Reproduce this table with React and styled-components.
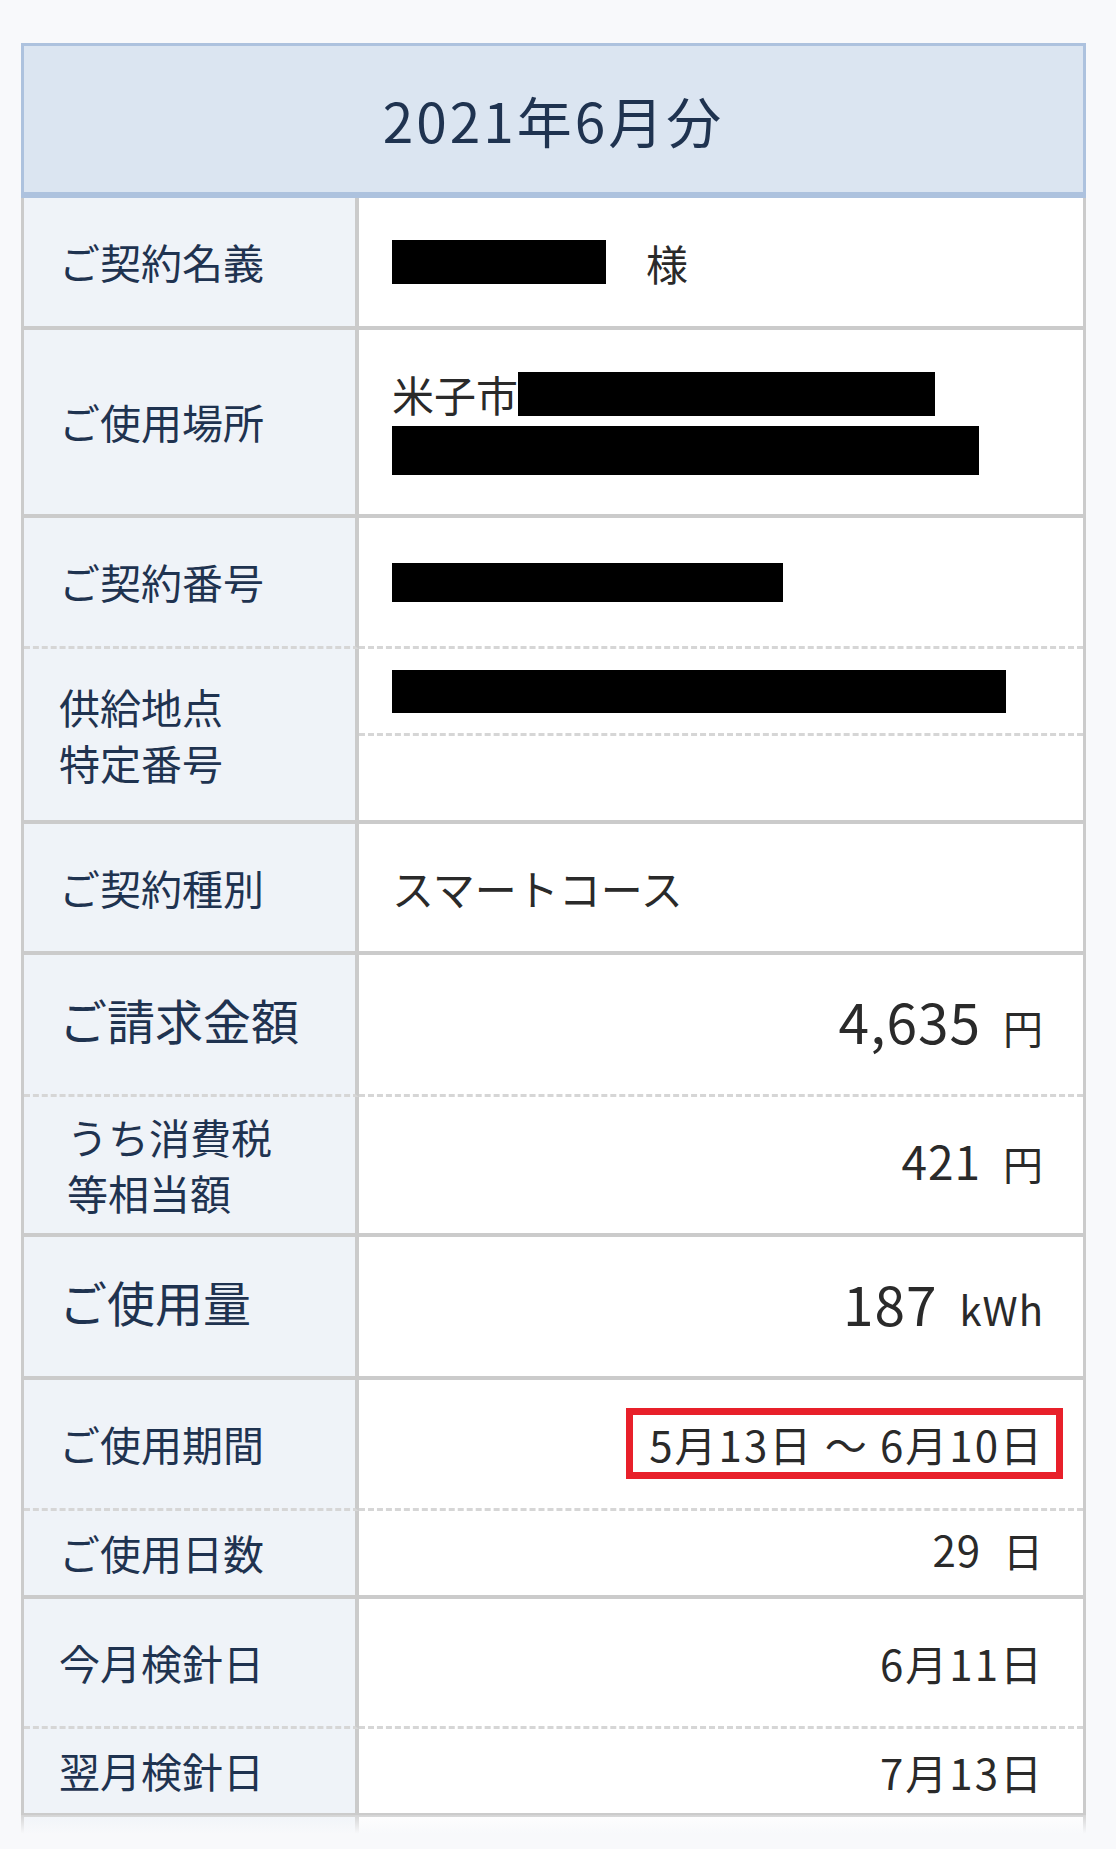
import styled, { createGlobalStyle } from "styled-components";

const GlobalStyle = createGlobalStyle`
  html, body {
    margin: 0;
    padding: 0;
    background: #f8f9fb;
  }
  body {
    font-family: "Noto Sans CJK JP", "Noto Sans", sans-serif;
  }
`;

const rows = [
  { label: "ご契約名義", h: 128, kind: "name" },
  { label: "ご使用場所", h: 184, kind: "address" },
  { label: "ご契約番号", h: 128, dashed: true, kind: "contract" },
  { label: ["供給地点", "特定番号"], h: 171, kind: "supply" },
  { label: "ご契約種別", h: 127, kind: "text", value: "スマートコース" },
  { label: "ご請求金額", big: true, h: 139, dashed: true, kind: "amount", num: "4,635", size: 55, unit: "円" },
  { label: ["うち消費税", "等相当額"], indent: 8, h: 136, kind: "amount", num: "421", size: 46, unit: "円" },
  { label: "ご使用量", big: true, h: 139, kind: "amount", num: "187", size: 55, unit: "kWh" },
  { label: "ご使用期間", h: 128, dashed: true, kind: "period", value: "5月13日 〜 6月10日" },
  { label: "ご使用日数", h: 84, kind: "amount", num: "29", size: 42, unit: "日" },
  { label: "今月検針日", h: 127, dashed: true, kind: "right", value: "6月11日" },
  { label: "翌月検針日", h: 84, kind: "right", value: "7月13日" },
];

const App = () => {
  return (
    <Page>
      <GlobalStyle />
      <Sheet>
        <Title>2021年6月分</Title>
        {rows.map((row, i) => (
          <Row key={i} $h={row.h} $dashed={row.dashed}>
            <Label $big={row.big} $indent={row.indent} $dashed={row.dashed}>
              <span>
                {Array.isArray(row.label)
                  ? row.label.map((line) => <LabelLine key={line}>{line}</LabelLine>)
                  : row.label}
              </span>
            </Label>
            {renderValue(row)}
          </Row>
        ))}
        <Row $h={60}>
          <Label />
          <Value />
        </Row>
      </Sheet>
      <Fade />
    </Page>
  );
};

const renderValue = (row) => {
  switch (row.kind) {
    case "name":
      return (
        <Value>
          <Redact $w={214} $h={44} />
          <Honorific>様</Honorific>
        </Value>
      );
    case "address":
      return (
        <Value>
          <Lines>
            <div>
              米子市
              <Redact $w={417} $h={44} />
            </div>
            <div>
              <Redact $w={587} $h={49} />
            </div>
          </Lines>
        </Value>
      );
    case "contract":
      return (
        <Value $dashed>
          <Redact $w={391} $h={39} />
        </Value>
      );
    case "supply":
      return (
        <Stack>
          <SubCell $dashed>
            <Redact $w={614} $h={43} />
          </SubCell>
          <SubCell />
        </Stack>
      );
    case "text":
      return <Value>{row.value}</Value>;
    case "amount":
      return (
        <Value $right $lift $dashed={row.dashed}>
          <span>
            <Num $size={row.size}>{row.num}</Num>
            <Unit>{row.unit}</Unit>
          </span>
        </Value>
      );
    case "period":
      return (
        <Value $right $dashed>
          <Marked>{row.value}</Marked>
        </Value>
      );
    default:
      return (
        <Value $right $dashed={row.dashed}>
          {row.value}
        </Value>
      );
  }
};

const Page = styled.div`
  position: relative;
  height: 1849px;
  overflow: hidden;
  box-sizing: border-box;
  padding: 43px 30px 0 21px;
  background: #f8f9fb;
`;

const Sheet = styled.section`
  display: flex;
  flex-direction: column;
`;

const Title = styled.h1`
  margin: 0;
  height: 155px;
  box-sizing: border-box;
  display: flex;
  align-items: center;
  justify-content: center;
  background: #dbe5f1;
  border: 3px solid #adc2de;
  border-bottom-width: 6px;
  font-size: 55px;
  font-weight: 400;
  letter-spacing: 3px;
  color: #1f3350;
`;

/* dashed rows carry their 3px dashed edge inside the cells */
const Row = styled.div`
  display: grid;
  grid-template-columns: 335px 1fr;
  height: ${(p) => p.$h + (p.$dashed ? 3 : 0)}px;
  border-left: 3px solid #cbcbcb;
  border-right: 3px solid #cbcbcb;
  border-bottom: ${(p) => (p.$dashed ? "none" : "4px solid #cbcbcb")};
`;

const dashedEdge = (p) => (p.$dashed ? "border-bottom: 3px dashed #d6d6d6;" : "");

const Label = styled.div`
  display: flex;
  align-items: center;
  box-sizing: border-box;
  padding-left: ${(p) => 35 + (p.$indent || 0)}px;
  padding-bottom: ${(p) => (p.$big ? 10 : 0)}px;
  background: #eff3f8;
  border-right: 4px solid #cbcbcb;
  ${dashedEdge}
  font-size: ${(p) => (p.$big ? 48 : 41)}px;
  line-height: 1.36;
  color: #1f3350;
`;

const LabelLine = styled.div``;

const Value = styled.div`
  display: flex;
  align-items: center;
  justify-content: ${(p) => (p.$right ? "flex-end" : "flex-start")};
  box-sizing: border-box;
  padding: 0 39px ${(p) => (p.$lift ? 10 : 0)}px 33px;
  background: #fff;
  ${dashedEdge}
  font-size: 42px;
  letter-spacing: ${(p) => (p.$right ? 2 : 0)}px;
  color: #2a2a2a;
  white-space: nowrap;
`;

const Stack = styled.div`
  display: flex;
  flex-direction: column;
  background: #fff;
`;

const SubCell = styled.div`
  display: flex;
  align-items: center;
  height: 84px;
  flex: ${(p) => (p.$dashed ? "none" : "1")};
  padding-left: 33px;
  ${dashedEdge}
`;

const Lines = styled.div`
  line-height: 56px;

  & > div {
    display: flex;
    align-items: center;
    height: 56px;
  }
`;

const Redact = styled.span`
  display: inline-block;
  width: ${(p) => p.$w}px;
  height: ${(p) => p.$h}px;
  background: #000;
  flex: none;
`;

const Honorific = styled.span`
  margin-left: 40px;
`;

const Num = styled.span`
  font-size: ${(p) => p.$size}px;
  letter-spacing: 1px;
`;

const Unit = styled.span`
  margin-left: 22px;
  font-size: 40px;
  letter-spacing: 1px;
`;

const Marked = styled.span`
  position: relative;
  display: inline-block;
  line-height: 1;

  &::after {
    content: "";
    position: absolute;
    top: -15px;
    bottom: -14px;
    left: -23px;
    right: -19px;
    border: 7px solid #e8202a;
  }
`;

const Fade = styled.div`
  position: absolute;
  left: 0;
  right: 0;
  bottom: 0;
  height: 34px;
  background: linear-gradient(rgba(248, 249, 251, 0.2), #f8f9fb 55%);
`;

export default App;
